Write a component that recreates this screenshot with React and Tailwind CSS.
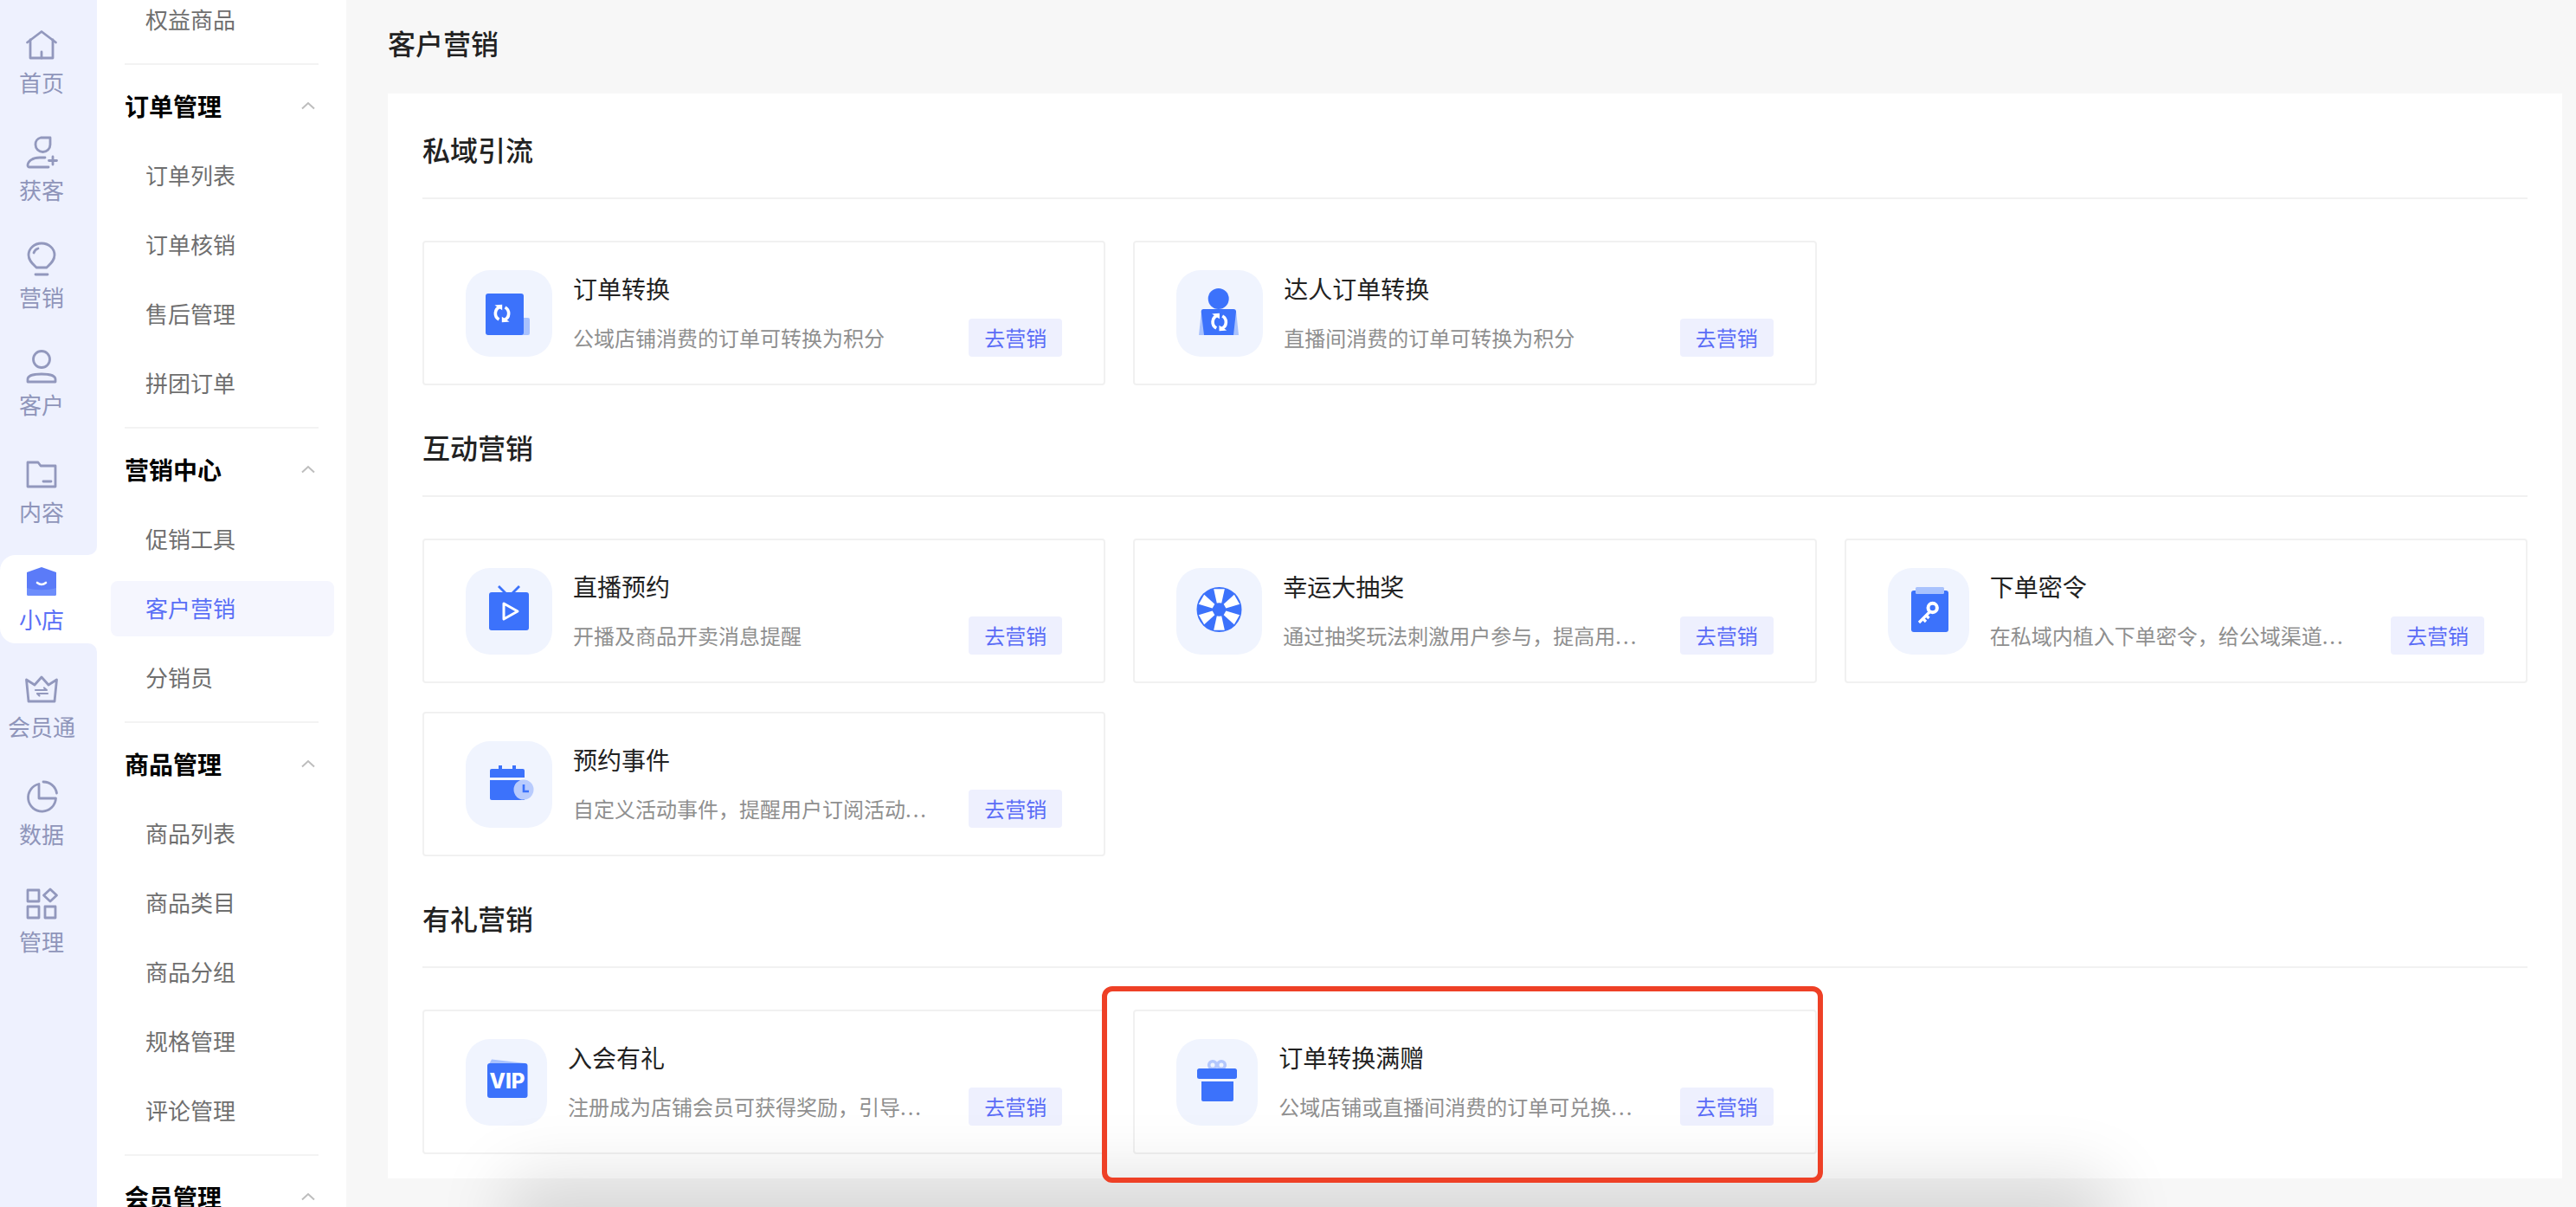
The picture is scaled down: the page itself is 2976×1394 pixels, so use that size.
import React from "react";

const BLUE = "#3c72fb";
const PALE = "#a9c2fd";

function Refresh({ cx, cy }) {
  return (
    <g fill="none" stroke="#fff" strokeWidth="3.6" transform={`translate(${cx} ${cy})`}>
      <path d="M-2.5 -7.5 A8 8 0 0 0 -3.5 7" />
      <path d="M2.5 7.5 A8 8 0 0 0 3.5 -7" />
      <path d="M-6.5 -9 L-0.5 -9.5 L-0.5 -5Z M6.5 9 L0.5 9.5 L0.5 5Z" fill="#fff" strokeWidth="1.4" />
    </g>
  );
}

function Svg({ children }) {
  return (
    <svg width="64" height="64" viewBox="0 0 64 64" className="shrink-0 overflow-visible">
      {children}
    </svg>
  );
}

const OrderIcon = () => (
  <Svg>
    <rect x="40" y="37" width="16" height="20" rx="2" fill={PALE} />
    <rect x="5" y="9" width="44" height="48" rx="3" fill={BLUE} />
    <Refresh cx={24} cy={32} />
  </Svg>
);
const PersonIcon = () => (
  <Svg>
    <path d="M11 29 L51 29 L54 57 L8 57Z" fill={PALE} />
    <circle cx="30.7" cy="15" r="12" fill={BLUE} />
    <path d="M14 27 H48 a3 3 0 0 1 3 3 L48 57 H14 L10.7 30 a3 3 0 0 1 3.3 -3Z" fill={BLUE} />
    <Refresh cx={31.7} cy={42} />
  </Svg>
);
const LiveIcon = () => (
  <Svg>
    <path d="M20 3 L28 11 M44 3 L36 11" stroke={BLUE} strokeWidth="2.8" fill="none" />
    <rect x="9" y="10" width="46" height="44" rx="3" fill={BLUE} />
    <path d="M26 23 L42 32 L26 41Z" fill="none" stroke="#fff" strokeWidth="3" strokeLinejoin="round" />
  </Svg>
);
const WheelIcon = () => {
  const wedges = [90, 30, -30, -90, -150, 150];
  const pt = (r, a) => {
    const rad = (a * Math.PI) / 180;
    return `${31.5 + r * Math.cos(rad)},${30 - r * Math.sin(rad)}`;
  };
  return (
    <Svg>
      <circle cx="31.5" cy="30" r="26" fill={BLUE} />
      {wedges.map((a) => (
        <polygon
          key={a}
          fill="#fff"
          points={`${pt(8, a - 20)} ${pt(8, a + 20)} ${pt(24.5, a + 15)} ${pt(24.5, a - 15)}`}
        />
      ))}
      <ellipse cx="31.5" cy="30" rx="6" ry="7.5" fill={BLUE} />
    </Svg>
  );
};
const KeyIcon = () => (
  <Svg>
    <rect x="12" y="8" width="43" height="48" rx="3" fill={BLUE} />
    <rect x="17" y="4" width="33" height="8" rx="1.5" fill={PALE} />
    <path d="M33 33 L21 45 M25.5 40.5 L29 44 M29 36.5 L32.5 40" stroke="#fff" strokeWidth="3.2" fill="none" />
    <circle cx="36.7" cy="28" r="5.2" fill="none" stroke="#fff" strokeWidth="4" />
  </Svg>
);
const CalendarIcon = () => (
  <Svg>
    <rect x="20" y="10" width="4" height="6" fill={BLUE} />
    <rect x="36" y="10" width="4" height="6" fill={BLUE} />
    <path d="M12 14 H48 a2 2 0 0 1 2 2 V24 H10 V16 a2 2 0 0 1 2 -2Z" fill={BLUE} />
    <path d="M10 27 H50 V50 H12 a2 2 0 0 1 -2 -2Z" fill={BLUE} />
    <circle cx="49" cy="38" r="11.5" fill="#b8cbfd" />
    <path d="M49 32 V40 H55" fill="none" stroke={BLUE} strokeWidth="2.6" />
  </Svg>
);
const VipIcon = () => (
  <Svg>
    <path d="M15 5.5 L54 10 L12 11Z" fill={PALE} />
    <rect x="10" y="10" width="46.5" height="40" rx="3" fill={BLUE} />
    <text x="33" y="38.5" textAnchor="middle" fill="#fff" fontSize="24" fontWeight="800" fontFamily="Inter, sans-serif">
      VIP
    </text>
  </Svg>
);
const GiftIcon = () => (
  <Svg>
    <circle cx="27" cy="12" r="4.3" fill="none" stroke="#b3c7fd" strokeWidth="3.6" />
    <circle cx="37" cy="12" r="4.3" fill="none" stroke="#b3c7fd" strokeWidth="3.6" />
    <rect x="9" y="16" width="46" height="12" rx="2.5" fill={BLUE} />
    <path d="M14 31 H51 V52 a2 2 0 0 1 -2 2 H16 a2 2 0 0 1 -2 -2Z" fill={BLUE} />
  </Svg>
);

function Card({ icon, title, desc, more, boxClass = "w-[100px]" }) {
  return (
    <div className="flex h-[167px] items-center rounded-[4px] border-2 border-[#f1f1f1] bg-white pl-[48px] pr-[48px]">
      <div className={`flex h-[100px] shrink-0 items-center justify-center rounded-[28px] bg-[#f0f4fe] ${boxClass}`}>
        {icon}
      </div>
      <div className="ml-[24px] flex h-[100px] min-w-0 flex-1 flex-col justify-between">
        <div className="text-[28px] leading-[42px] text-[#222222]">{title}</div>
        <div className="whitespace-nowrap text-[24px] leading-[44px] text-[#8f8f8f]">
          {desc}
          {more && <span className="tracking-[2px]">...</span>}
        </div>
      </div>
      <button className="mt-[56px] flex h-[44px] w-[108px] shrink-0 items-center justify-center rounded-[4px] bg-[#eef0fe] text-[24px] text-[#5a6cf6]">
        去营销
      </button>
    </div>
  );
}

function Section({ title, first, children }) {
  return (
    <section className={first ? "pt-[40px]" : "pt-[47px]"}>
      <h2 className="border-b-2 border-[#f1f1f1] pb-[32px] text-[32px] font-medium leading-[48px] text-[#222222]">
        {title}
      </h2>
      <div className="mt-[48px] grid grid-cols-3 gap-x-[32px] gap-y-[33px]">{children}</div>
    </section>
  );
}

const stroke = { fill: "none", stroke: "#9298bd", strokeWidth: 2.8, strokeLinejoin: "round", strokeLinecap: "round" };
const RailSvg = ({ children }) => (
  <svg width="40" height="40" viewBox="0 0 40 40" className="shrink-0 overflow-visible">
    {children}
  </svg>
);

const rail = {
  home: (
    <RailSvg>
      <g {...stroke}>
        <path d="M3.5 17 L20 4.5 L36.5 17" />
        <path d="M7 14 V35 H33 V14" />
        <path d="M20 28 V35" />
      </g>
    </RailSvg>
  ),
  add: (
    <RailSvg>
      <g {...stroke}>
        <path d="M19 3 H30 V11 A8.5 8.5 0 0 1 13 11 A8 8 0 0 1 19 3Z" />
        <path d="M28 37 H6 a2 2 0 0 1 -2 -2 C4 30 10 26 18 26 H24" />
        <path d="M33 25 V34 M28.5 29.5 H37.5" />
      </g>
    </RailSvg>
  ),
  bulb: (
    <RailSvg>
      <g {...stroke}>
        <path d="M20 1 C28.5 1 35 7 35 14.5 C35 21 30 25 26 29 H14 C10 25 5 21 5 14.5 C5 7 11.5 1 20 1Z" />
        <path d="M11 12 C12 9 14 7.5 16 7 M13 37 H27" />
      </g>
    </RailSvg>
  ),
  user: (
    <RailSvg>
      <g {...stroke}>
        <circle cx="20" cy="11" r="9.5" />
        <path d="M4 37 V34 C4 30 11 28 20 28 S36 30 36 34 V37Z" />
      </g>
    </RailSvg>
  ),
  folder: (
    <RailSvg>
      <g {...stroke}>
        <path d="M4 6 H16 L19 10 H36 V34 H4Z" />
        <path d="M22 28 H31" />
      </g>
    </RailSvg>
  ),
  store: (
    <RailSvg>
      <path d="M20 3 L37 9 V34 a2 2 0 0 1 -2 2 H5 a2 2 0 0 1 -2 -2 V9Z" fill="#5b7bf8" />
      <path d="M3 27 C12 30 28 30 37 27 V34 a2 2 0 0 1 -2 2 H5 a2 2 0 0 1 -2 -2Z" fill="#6d8dfb" />
      <path d="M15 21 Q20 25 25 21" fill="none" stroke="#fff" strokeWidth="2.6" strokeLinecap="round" />
    </RailSvg>
  ),
  crown: (
    <RailSvg>
      <g {...stroke}>
        <path d="M2.5 9 L12 15 L20 6 L28 15 L37.5 9 L35 34 H5Z" />
        <path d="M13 21 H26 L23 18.5 M27 25 H15 L17.5 27.5" strokeWidth="2.2" />
      </g>
    </RailSvg>
  ),
  pie: (
    <RailSvg>
      <g {...stroke}>
        <path d="M17 5.5 A16 16 0 1 0 36.5 22 H17Z" />
        <path d="M22 3 A15.5 15.5 0 0 1 37.5 16" />
      </g>
    </RailSvg>
  ),
  grid: (
    <RailSvg>
      <g {...stroke}>
        <rect x="4" y="4" width="13" height="13" />
        <rect x="4" y="23" width="13" height="13" />
        <rect x="24" y="23" width="12" height="13" />
        <path d="M30 3 L37.5 10 L30 17 L22.5 10Z" />
      </g>
    </RailSvg>
  ),
};

function RailItem({ icon, label, active }) {
  return (
    <div
      className={`flex h-[102px] w-[96px] flex-col items-center pt-[11px] ${
        active ? "text-[#5a70f6]" : "text-[#8f95ba]"
      }`}
    >
      {icon}
      <span className="mt-[5px] text-[26px] leading-[36px]">{label}</span>
    </div>
  );
}

function Chevron() {
  return (
    <svg width="16" height="10" viewBox="0 0 16 10" fill="none" stroke="#bdbdbd" strokeWidth="2">
      <path d="M1 8.5 L8 2 L15 8.5" />
    </svg>
  );
}

function MenuGroup({ title, items, activeItem, last }) {
  return (
    <div>
      <div className="mt-[16px] flex h-[64px] items-center justify-between pb-[2px] pr-[4px]">
        <span className="text-[28px] font-bold text-black">{title}</span>
        <Chevron />
      </div>
      {items && (
        <div className="mt-[16px] flex flex-col gap-[16px]">
          {items.map((t) => (
            <MenuItem key={t} text={t} active={t === activeItem} />
          ))}
        </div>
      )}
      {!last && <div className="mt-[18px] h-[2px] bg-[#f3f3f3]" />}
    </div>
  );
}

function MenuItem({ text, active }) {
  return (
    <div
      className={`-ml-[16px] -mr-[18px] flex h-[64px] items-center rounded-[8px] pb-[3px] pl-[40px] text-[26px] ${
        active ? "bg-[#f5f6fe] text-[#5a70f6]" : "text-[#6f6f6f]"
      }`}
    >
      {text}
    </div>
  );
}

export default function App() {
  return (
    <div className="relative flex h-[1394px] w-[2976px] overflow-hidden bg-[#f7f7f7] font-['Noto_Sans_CJK_SC',sans-serif]">
      {/* icon rail */}
      <aside className="flex w-[112px] shrink-0 flex-col bg-white">
        <div className="flex h-[641px] flex-col gap-[22px] rounded-br-[10px] bg-[#eef1fe] pt-[21px]">
          <RailItem icon={rail.home} label="首页" />
          <RailItem icon={rail.add} label="获客" />
          <RailItem icon={rail.bulb} label="营销" />
          <RailItem icon={rail.user} label="客户" />
          <RailItem icon={rail.folder} label="内容" />
        </div>
        <div className="bg-[#eef1fe]">
          <div className="rounded-l-[18px] bg-white">
            <RailItem icon={rail.store} label="小店" active />
          </div>
        </div>
        <div className="flex flex-1 flex-col gap-[22px] rounded-tr-[10px] bg-[#eef1fe] pt-[22px]">
          <RailItem icon={rail.crown} label="会员通" />
          <RailItem icon={rail.pie} label="数据" />
          <RailItem icon={rail.grid} label="管理" />
        </div>
      </aside>

      {/* menu */}
      <nav className="-mt-[9px] w-[288px] shrink-0 self-start bg-white px-[32px] pb-[40px]">
        <MenuItem text="权益商品" />
        <div className="mt-[18px] h-[2px] bg-[#f3f3f3]" />
        <MenuGroup title="订单管理" items={["订单列表", "订单核销", "售后管理", "拼团订单"]} />
        <MenuGroup title="营销中心" items={["促销工具", "客户营销", "分销员"]} activeItem="客户营销" />
        <MenuGroup title="商品管理" items={["商品列表", "商品类目", "商品分组", "规格管理", "评论管理"]} />
        <MenuGroup title="会员管理" last />
      </nav>

      {/* main */}
      <main className="min-w-0 flex-1 pl-[48px] pr-[16px]">
        <div className="flex h-[108px] items-center pb-[10px] text-[32px] font-medium text-[#222222]">客户营销</div>
        <div className="h-[1253px] bg-white px-[40px]">
          <Section title="私域引流" first>
            <Card icon={<OrderIcon />} title="订单转换" desc="公域店铺消费的订单可转换为积分" />
            <Card icon={<PersonIcon />} title="达人订单转换" desc="直播间消费的订单可转换为积分" />
          </Section>
          <Section title="互动营销">
            <Card icon={<LiveIcon />} title="直播预约" desc="开播及商品开卖消息提醒" />
            <Card icon={<WheelIcon />} title="幸运大抽奖" desc="通过抽奖玩法刺激用户参与，提高用" more boxClass="w-[99px]" />
            <Card icon={<KeyIcon />} title="下单密令" desc="在私域内植入下单密令，给公域渠道" more boxClass="w-[94px]" />
            <Card icon={<CalendarIcon />} title="预约事件" desc="自定义活动事件，提醒用户订阅活动" more />
          </Section>
          <Section title="有礼营销">
            <Card icon={<VipIcon />} title="入会有礼" desc="注册成为店铺会员可获得奖励，引导" more boxClass="w-[94px]" />
            <Card icon={<GiftIcon />} title="订单转换满赠" desc="公域店铺或直播间消费的订单可兑换" more boxClass="w-[94px]" />
          </Section>
        </div>
      </main>

      {/* bottom drop shadow of the cropped window */}
      <div className="pointer-events-none absolute bottom-[-50px] left-[620px] h-[50px] w-[1780px] shadow-[0_0_80px_34px_rgba(0,0,0,0.13)]" />

      {/* red annotation */}
      <div className="pointer-events-none absolute left-[1273px] top-[1139px] h-[227px] w-[833px] rounded-[12px] border-[6px] border-[#ee4026]" />
    </div>
  );
}
